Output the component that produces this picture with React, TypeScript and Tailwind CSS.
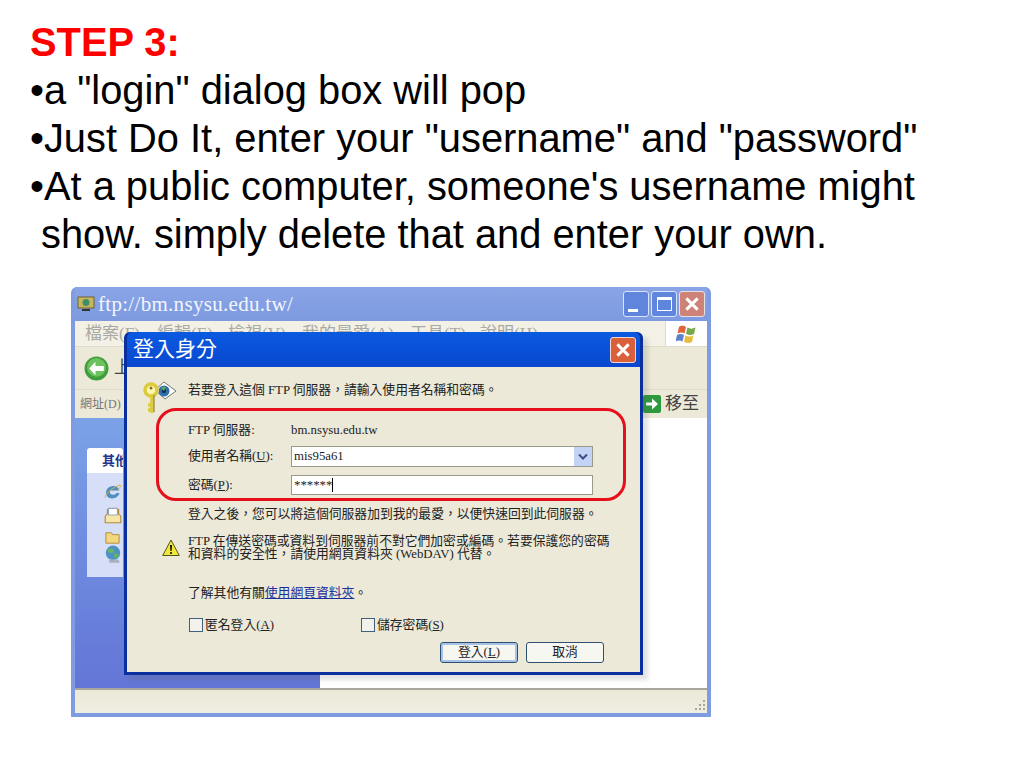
import React from 'react';

const cjk = "font-['Liberation_Serif','Noto_Sans_CJK_TC',serif]";

const BackIcon = () => (
  <svg viewBox="0 0 24 24" className="h-[25px] w-[25px]">
    <circle cx="12" cy="12" r="11.500" fill="#3f9e3b" />
    <circle cx="12" cy="11" r="9" fill="#6cc25e" />
    <path d="M5 12l6-6.500v4h8v5h-8v4z" fill="#fff" />
  </svg>
);

const GoIcon = () => (
  <svg viewBox="0 0 18 18" className="h-[18px] w-[18px]">
    <rect width="18" height="18" rx="2" fill="#2d9a3f" />
    <path d="M3 7.500h6V3.500L15 9l-6 5.500v-4H3z" fill="#fff" />
  </svg>
);

const XpFlag = () => (
  <svg viewBox="0 0 22 22" className="h-[22px] w-[22px]">
    <path d="M3 4c3-2 5-1 7 0l-1.500 6.500c-2-1-4-1.500-7 0z" fill="#e2633a" />
    <path d="M11.500 4.500c2.500 1.500 5 1.500 8 0l-1.500 6.500c-3 1.500-5.500 1-8-.3z" fill="#76a94a" />
    <path d="M1 12c3-1.500 5-1 7 0l-1.500 6.500c-2-1-4.500-1.500-7 0z" fill="#5b82c9" />
    <path d="M9.500 12.500c2.500 1.300 5 1.500 8 0l-1.500 6.500c-3 1.500-5.500 1-8-.3z" fill="#e8bd3f" />
  </svg>
);

const KeyIcon = () => (
  <svg viewBox="0 0 34 36" className="h-[36px] w-[34px]">
    <path d="M12 10l9-8 12 9-11 8z" fill="#fff" stroke="#555" strokeWidth="0.8" />
    <circle cx="21" cy="11" r="5.500" fill="#2f6fb0" />
    <circle cx="21" cy="11" r="2.200" fill="#17324f" />
    <path d="M18 8a4 4 0 0 1 5-1l-2 4z" fill="#56a85a" />
    <circle cx="8" cy="10" r="6" fill="#fff7b0" stroke="#dccb3c" strokeWidth="3.500" />
    <path d="M9 15v18M9 25h-4M9 30h-4" stroke="#dccb3c" strokeWidth="3.600" fill="none" />
    <path d="M11 15v17" stroke="#7e7424" strokeWidth="1" />
    <circle cx="8" cy="8" r="1.500" fill="#7e7424" />
  </svg>
);

const WarnIcon = () => (
  <svg viewBox="0 0 18 18" className="h-[18px] w-[18px]">
    <path d="M9 1l8.300 15.500H.7z" fill="#f2e83a" stroke="#55551a" strokeWidth="1" strokeLinejoin="round" />
    <path d="M8 6h2l-.4 6H8.400z" fill="#111" />
    <circle cx="9" cy="14" r="1.100" fill="#111" />
  </svg>
);

const TaskIcons = () => (
  <div className="flex w-[36px] flex-col items-center pl-[15px] pt-[10px]">
    <svg viewBox="0 0 18 18" className="h-[18px] w-[18px]">
      <path d="M2 10a7 7 0 0 1 13.500-2.500H6.500a3 3 0 0 0 0 3.500c2 1.500 5 .8 6-1h3C13.500 17.500 2 17 2 10z" fill="#4f8fc0" />
      <path d="M1 15c0-4 8-11 15-13 1.500 1-1 4-2 5" fill="none" stroke="#d8b24a" strokeWidth="1" />
    </svg>
    <svg viewBox="0 0 18 18" className="mt-[4px] h-[20px] w-[20px]">
      <path d="M4 8V4h10v4l2 2v6H2v-6z" fill="#f6e7a8" stroke="#b08b3e" />
      <path d="M5 3h8v6H5z" fill="#fff" stroke="#9aa7b8" />
    </svg>
    <svg viewBox="0 0 18 18" className="mt-[4px] h-[17px] w-[19px]">
      <path d="M2 4h6l1 2h7v9H2z" fill="#f3d77c" stroke="#b08b3e" />
    </svg>
    <svg viewBox="0 0 18 18" className="-mt-[1px] h-[20px] w-[20px]">
      <circle cx="9" cy="7" r="6.500" fill="#4c92c4" />
      <path d="M4 4c3-2 5-1 6 1s-3 3-6 1zM10 8c3-1 5 0 4 2s-3 2-4 1z" fill="#63b36a" />
      <path d="M5 13h9l1 3H6z" fill="#a9b1bb" />
    </svg>
  </div>
);

const Grip = () => (
  <div className="mb-[3px] mr-[2px] grid grid-cols-3 gap-[2px] self-end">
    {[0, 0, 1, 0, 1, 1, 1, 1, 1].map((on, i) => (
      <span key={i} className={on ? 'h-[2px] w-[2px] bg-[#a8a595]' : 'h-[2px] w-[2px]'} />
    ))}
  </div>
);

const Dialog = () => (
  <div className={`absolute left-[53px] top-[45px] h-[343px] w-[519px] rounded-t-[6px] bg-[#0a2f9e] p-[3px] pt-0 shadow-[5px_5px_4px_rgba(90,90,90,0.18)] ${cjk}`}>
    <div className="flex h-[35px] items-center justify-between rounded-t-[6px] bg-gradient-to-b from-[#0a5ae0] to-[#0a47d0] pl-[6px] pr-[4px]">
      <span className="text-[21px] leading-none text-white">登入身分</span>
      <span className="flex h-[26px] w-[26px] items-center justify-center rounded-[3px] border border-[#f0d8d0] bg-[#d9603a]">
        <svg viewBox="0 0 16 16" className="h-[18px] w-[18px]">
          <path d="M3 3l10 10M13 3L3 13" stroke="#fff" strokeWidth="2.600" />
        </svg>
      </span>
    </div>
    <div className="relative h-[305px] bg-[#ece9d8] text-[12.800px] leading-[13px] text-[#222]">
      <div className="flex items-start pl-[16px] pt-[13px]">
        <KeyIcon />
        <span className="ml-[11px] mt-[4px]">若要登入這個 FTP 伺服器&#xFF0C;請輸入使用者名稱和密碼。</span>
      </div>
      <div className="mt-[7px] flex h-[14px] items-center pl-[61px]">
        <span className="w-[103px]">FTP 伺服器:</span>
        <span>bm.nsysu.edu.tw</span>
      </div>
      <div className="mt-[9px] flex items-center pl-[61px]">
        <span className="w-[103px]">使用者名稱(<u>U</u>):</span>
        <div className="flex h-[21px] w-[302px] items-center justify-between border border-[#9a9a8c] bg-white pl-[2px]">
          <span>mis95a61</span>
          <span className="flex h-[19px] w-[18px] items-center justify-center bg-[#c3d3f5]">
            <svg viewBox="0 0 10 8" className="h-[8px] w-[10px]">
              <path d="M1 1.500l4 4 4-4" fill="none" stroke="#3a4f80" strokeWidth="2" />
            </svg>
          </span>
        </div>
      </div>
      <div className="mt-[8px] flex items-center pl-[61px]">
        <span className="w-[103px]">密碼(<u>P</u>):</span>
        <div className="flex h-[20px] w-[302px] items-center border border-[#9a9a8c] bg-white pl-[2px]">
          <span className="leading-none">******</span>
          <span className="h-[14px] w-px bg-black" />
        </div>
      </div>
      <p className="ml-[61px] mt-[13px] whitespace-nowrap">登入之後&#xFF0C;您可以將這個伺服器加到我的最愛&#xFF0C;以便快速回到此伺服器。</p>
      <div className="mt-[14px] flex items-center pl-[35px]">
        <WarnIcon />
        <p className="ml-[8px] whitespace-nowrap">
          FTP 在傳送密碼或資料到伺服器前不對它們加密或編碼。若要保護您的密碼
          <br />
          和資料的安全性&#xFF0C;請使用網頁資料夾 (WebDAV) 代替。
        </p>
      </div>
      <p className="ml-[61px] mt-[26px]">
        了解其他有關<span className="text-[#1a2f9e] underline">使用網頁資料夾</span>。
      </p>
      <div className="mt-[18px] flex items-center pl-[62px]">
        <span className="flex w-[172px] items-center gap-[2px]">
          <span className="h-[14px] w-[14px] border border-[#3f5f7f] bg-[#f2f2ea]" />
          <span>匿名登入(<u>A</u>)</span>
        </span>
        <span className="flex items-center gap-[2px]">
          <span className="h-[14px] w-[14px] border border-[#3f5f7f] bg-[#f2f2ea]" />
          <span>儲存密碼(<u>S</u>)</span>
        </span>
      </div>
      <div className="mt-[10px] flex justify-end gap-[8px] pr-[36px]">
        <button className="h-[21px] w-[78px] rounded-[3px] border border-[#2f4f70] bg-[#f7f7f2] shadow-[inset_0_0_0_2px_#a9c3e8]">
          登入(<u>L</u>)
        </button>
        <button className="h-[21px] w-[78px] rounded-[3px] border border-[#2f4f70] bg-[#f7f7f2]">取消</button>
      </div>
      <div className="absolute left-[29px] top-[41px] h-[93px] w-[470px] rounded-[20px] border-[3px] border-[#e5101c]" />
    </div>
  </div>
);

const XpWindow = () => (
  <div className={`relative ml-[71px] mt-[29px] flex h-[430px] w-[640px] flex-col rounded-t-[6px] bg-[#7f9ce0] px-[4px] pb-[4px] ${cjk}`}>
    <div className="flex h-[34px] flex-none items-center justify-between bg-gradient-to-b from-[#8aa5e6] to-[#7d9ae0] pl-[2px] pr-[2px]">
      <div className="flex items-center gap-[3px]">
        <svg viewBox="0 0 18 18" className="h-[18px] w-[18px]">
          <rect x="1" y="2" width="16" height="11" fill="#c9b65a" stroke="#6a6330" />
          <circle cx="9" cy="7.500" r="3.500" fill="#3f8f6a" />
          <path d="M5 15h8" stroke="#333" strokeWidth="2" />
        </svg>
        <span className="text-[21px] leading-none tracking-[0.3px] text-[#f2f5fd]">ftp://bm.nsysu.edu.tw/</span>
      </div>
      <div className="flex gap-[2px]">
        <span className="flex h-[26px] w-[26px] items-end rounded-[3px] border border-[#dbe4fa] bg-[#5f86dc] p-[4px]">
          <span className="h-[3px] w-[10px] bg-white" />
        </span>
        <span className="flex h-[26px] w-[26px] items-center justify-center rounded-[3px] border border-[#dbe4fa] bg-[#5f86dc]">
          <span className="h-[14px] w-[15px] border-[1.500px] border-t-[3px] border-white" />
        </span>
        <span className="flex h-[26px] w-[26px] items-center justify-center rounded-[3px] border border-[#e8e0e8] bg-[#cf8378]">
          <svg viewBox="0 0 16 16" className="h-[18px] w-[18px]">
            <path d="M3 3l10 10M13 3L3 13" stroke="#fff" strokeWidth="2.600" />
          </svg>
        </span>
      </div>
    </div>
    <div className="flex h-[25px] flex-none items-start justify-between bg-[#f3f1e6] pl-[10px] text-[17px] leading-[20px] text-[#a9a9a3]">
      <div className="flex pt-[3px]">
        <span className="w-[72px]">檔案(F)</span>
        <span className="w-[71px]">編輯(E)</span>
        <span className="w-[74px]">檢視(V)</span>
        <span className="w-[108px]">我的最愛(A)</span>
        <span className="w-[70px]">工具(T)</span>
        <span>說明(H)</span>
      </div>
      <div className="flex h-[25px] w-[42px] items-center justify-center border-l border-[#dedbc9] bg-white">
        <XpFlag />
      </div>
    </div>
    <div className="flex h-[43px] flex-none items-center border-t border-[#dedbc9] bg-[#ece9d8] pl-[9px] text-[17px] text-[#444]">
      <BackIcon />
      <span className="ml-[5px]">上</span>
    </div>
    <div className="flex h-[29px] flex-none items-center justify-between border-t border-[#dedbc9] bg-[#ece9d8] pl-[5px] pr-[8px]">
      <span className="text-[12px] text-[#777]">網址(D)</span>
      <div className="flex items-center gap-[4px] text-[17px] text-[#444]">
        <GoIcon />
        移至
      </div>
    </div>
    <div className="flex min-h-0 flex-1 bg-white">
      <div className="h-full w-[245px] bg-gradient-to-b from-[#7ba2e7] to-[#6375d6] pl-[12px] pt-[30px]">
        <div className="flex h-[25px] w-[36px] items-center overflow-hidden whitespace-nowrap rounded-t-[3px] bg-white pl-[15px] text-[13px] font-bold text-[#21348f]">其他</div>
        <div className="h-[104px] w-[36px] bg-[#d6dff7]">
          <TaskIcons />
        </div>
      </div>
    </div>
    <div className="flex h-[25px] flex-none justify-end border-t-2 border-[#a8a69a] bg-gradient-to-b from-[#ece9d8] to-[#f0eee2]">
      <Grip />
    </div>
    <Dialog />
  </div>
);

export default function App() {
  return (
    <div className="h-[768px] w-[1024px] overflow-hidden bg-white font-['Liberation_Sans',Arial,sans-serif]">
      <div className="pl-[30px] pt-[18px] text-[39.850px] leading-[48px] text-black">
        <div className="font-bold text-[#ff0000]">STEP 3:</div>
        <div>•a "login" dialog box will pop</div>
        <div>•Just Do It, enter your "username" and "password"</div>
        <div>•At a public computer, someone's username might</div>
        <div className="pl-[11px]">show. simply delete that and enter your own.</div>
      </div>
      <XpWindow />
    </div>
  );
}
